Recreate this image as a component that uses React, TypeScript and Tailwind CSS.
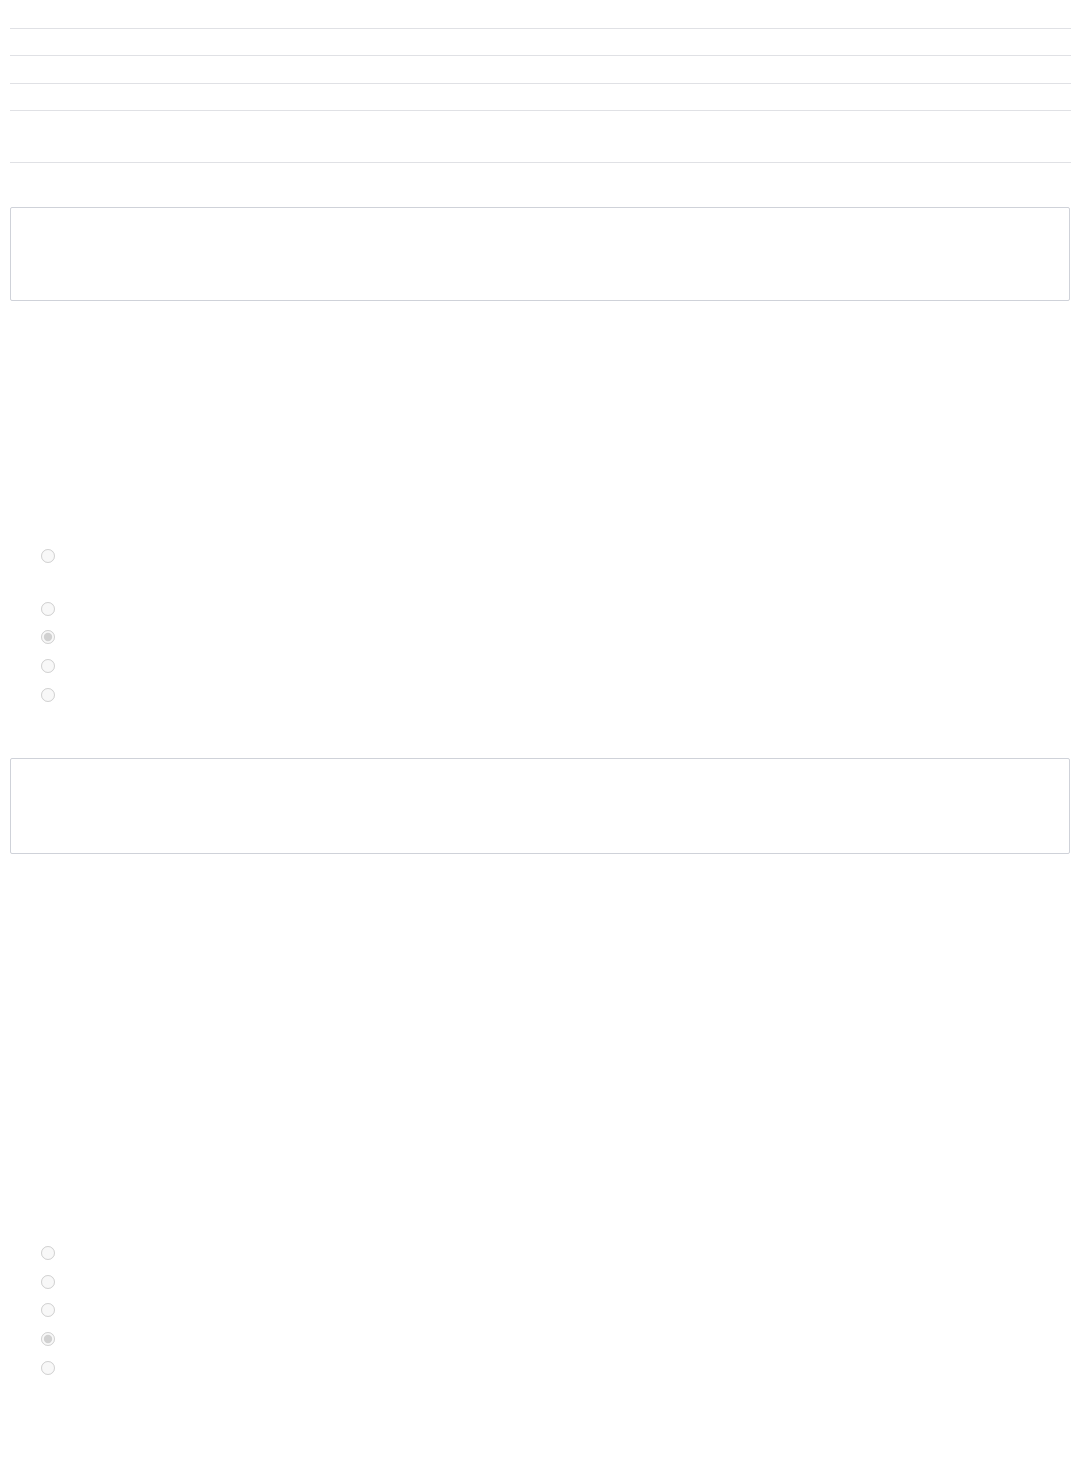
import React from 'react';

function Radio({ checked = false }: { checked?: boolean }) {
  return (
    <div className="flex h-[13px] items-center pl-[31px]">
      <input type="radio" disabled defaultChecked={checked} className="m-0 h-[14px] w-[14px]" />
    </div>
  );
}

export default function App() {
  return (
    <div className="min-h-[1480px] w-full bg-white pl-[10px] pr-[8px] font-['Liberation_Sans',sans-serif] text-white">
      <div className="flex flex-col">
        <div className="h-[29px] border-b border-[#e0e1e5]" />
        <div className="h-[27px] border-b border-[#e0e1e5]" />
        <div className="h-[28px] border-b border-[#e0e1e5]" />
        <div className="h-[27px] border-b border-[#e0e1e5]" />
        <div className="h-[52px] border-b border-[#e0e1e5]" />
      </div>

      <div className="mr-[1px] mt-[44px] h-[94px] rounded-[2px] border border-[#cfd2d9]" />

      <div className="mt-[248px] flex flex-col">
        <Radio />
        <div className="h-[40px]" />
        <Radio />
        <div className="h-[15px]" />
        <Radio checked />
        <div className="h-[16px]" />
        <Radio />
        <div className="h-[16px]" />
        <Radio />
      </div>

      <div className="mr-[1px] mt-[57px] h-[96px] rounded-[2px] border border-[#cfd2d9]" />

      <div className="mt-[392px] flex flex-col">
        <Radio />
        <div className="h-[16px]" />
        <Radio />
        <div className="h-[15px]" />
        <Radio />
        <div className="h-[16px]" />
        <Radio checked />
        <div className="h-[16px]" />
        <Radio />
      </div>
    </div>
  );
}
